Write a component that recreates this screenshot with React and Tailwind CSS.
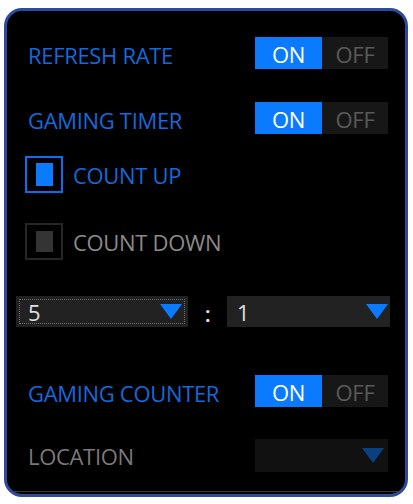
import React from "react";

const font = { fontFamily: '"Open Sans", "Noto Sans", sans-serif' };

function Toggle() {
  return (
    <div className="flex h-[32px] w-[133px] text-[22px] leading-none">
      <div className="flex w-[67px] items-center justify-center bg-[#0a7bff] pt-[1px] text-white">ON</div>
      <div className="flex flex-1 items-center justify-center bg-[#171717] pt-[1px] text-[#5a5a5a]">OFF</div>
    </div>
  );
}

function Caret({ color = "#0a7bff" }) {
  return (
    <svg width="22" height="15" viewBox="0 0 22 15">
      <path d="M0 0 H22 L11 15 Z" fill={color} />
    </svg>
  );
}

export default function App() {
  return (
    <div className="h-[504px] w-[413px] bg-white pl-[4px] pt-[8px] tracking-[-0.02em]" style={font}>
      <div className="flex h-[489px] w-[404px] flex-col rounded-[18px] border-[3px] border-[#2d4b9c] bg-black pb-[2px]">
        {/* Refresh rate */}
        <div className="mt-[26px] flex h-[32px] items-center justify-between pl-[21px] pr-[17px]">
          <span className="pt-[4px] text-[22px] text-[#1469dc]">REFRESH RATE</span>
          <Toggle />
        </div>

        {/* Gaming timer */}
        <div className="mt-[33px] flex h-[32px] items-center justify-between pl-[21px] pr-[17px]">
          <span className="pt-[4px] text-[22px] text-[#1469dc]">GAMING TIMER</span>
          <Toggle />
        </div>

        {/* Count up */}
        <div className="mt-[22px] flex h-[37px] items-center gap-[10px] pl-[18px]">
          <div className="flex h-[37px] w-[38px] items-center justify-center border-2 border-[#0a6ef0]">
            <div className="h-[23px] w-[17px] bg-[#0a7bff]" />
          </div>
          <span className="pt-[2px] text-[22px] text-[#1469dc]">COUNT UP</span>
        </div>

        {/* Count down */}
        <div className="mt-[30px] flex h-[37px] items-center gap-[10px] pl-[18px]">
          <div className="flex h-[37px] w-[38px] items-center justify-center border-2 border-[#262626]">
            <div className="h-[21px] w-[17px] bg-[#343434]" />
          </div>
          <span className="pt-[2px] text-[22px] text-[#8a8a8a]">COUNT DOWN</span>
        </div>

        {/* Timer selects */}
        <div className="mt-[36px] flex h-[31px] items-center pl-[9px] pr-[15px]">
          <div className="flex h-full w-[172px] items-center justify-between bg-[#222] pl-[12px] pr-[6px] text-[22px] text-[#e0e0e0] outline-1 outline-dotted outline-[#6a6a6a] outline-offset-[-4px]">
            <span className="pt-[2px]">5</span>
            <Caret />
          </div>
          <span className="flex-1 pt-[4px] text-center text-[22px] font-semibold text-[#e0e0e0]">:</span>
          <div className="flex h-full w-[163px] items-center justify-between bg-[#222] pl-[10px] pr-[2px] text-[22px] text-[#e0e0e0]">
            <span className="pt-[2px]">1</span>
            <Caret />
          </div>
        </div>

        {/* Gaming counter */}
        <div className="mt-[48px] flex h-[32px] items-center justify-between pl-[21px] pr-[17px]">
          <span className="pt-[4px] text-[22px] text-[#1469dc]">GAMING COUNTER</span>
          <Toggle />
        </div>

        {/* Location */}
        <div className="mt-[32px] flex h-[33px] items-center justify-between pl-[21px] pr-[17px]">
          <span className="pt-[1px] text-[22px] text-[#7a7a7a]">LOCATION</span>
          <div className="flex h-full w-[133px] items-center justify-end bg-[#111] pr-[4px]">
            <Caret color="#0a3f80" />
          </div>
        </div>

        <div className="flex-1" />
        <div className="mx-[6px] h-px bg-[#3a3a3a]" />
      </div>
    </div>
  );
}
